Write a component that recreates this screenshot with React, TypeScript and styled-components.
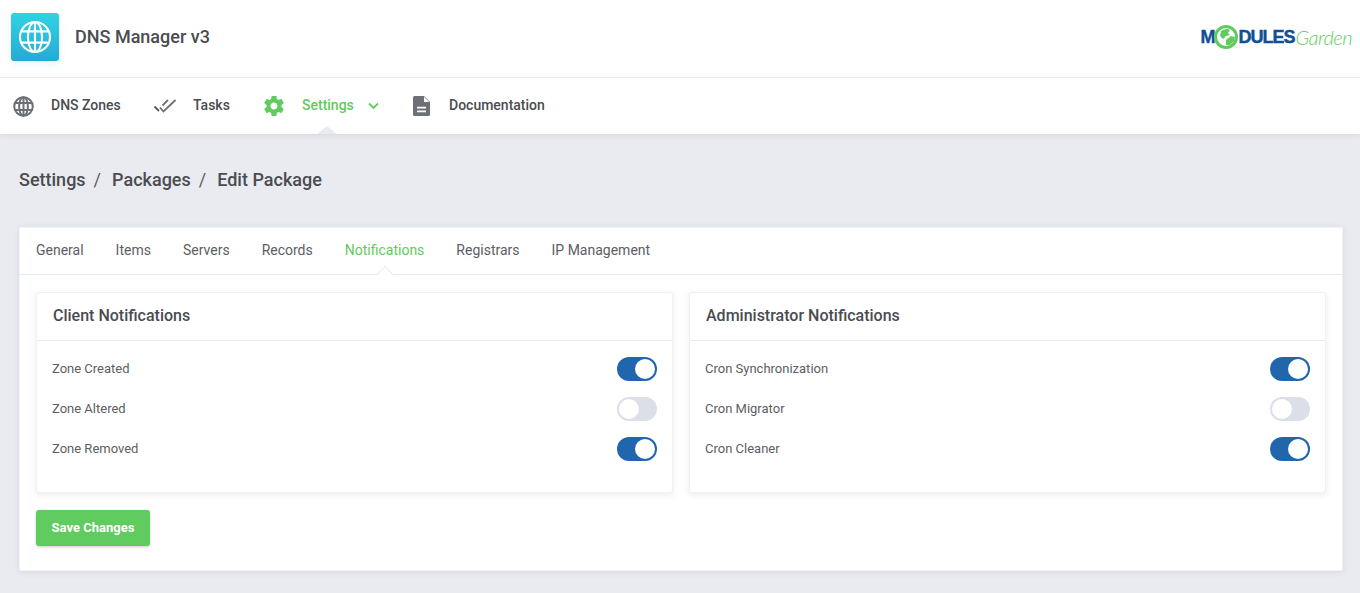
import React from "react";
import styled, { createGlobalStyle } from "styled-components";

const Global = createGlobalStyle`
  html, body { margin: 0; padding: 0; }
  body { background: #e9ebf0; font-family: Roboto, "Liberation Sans", sans-serif; color: #4a4c50; }
  * { box-sizing: border-box; }
`;

const Page = styled.div`
  height: 593px;
  overflow: hidden;
  background: #e9ebf0;
`;
const TopBar = styled.header`
  height: 78px;
  background: #fff;
  border-bottom: 1px solid #eeeff2;
  display: flex;
  align-items: center;
  justify-content: space-between;
  padding: 0 8px 3px 11px;
`;
const Brand = styled.div`
  display: flex;
  align-items: center;
  gap: 16px;
`;
const AppIcon = styled.div`
  width: 48px;
  height: 48px;
  border-radius: 3px;
  background: linear-gradient(180deg, #30d3e2 0%, #24abd5 100%);
  display: flex;
  align-items: center;
  justify-content: center;
  box-shadow: 0 3px 8px rgba(40, 170, 210, 0.12);
`;
const AppName = styled.div`
  font-size: 18px;
  font-weight: 500;
  color: #4a4c50;
  padding-bottom: 2px;
`;
const Logo = styled.div`
  display: flex;
  align-items: center;
  line-height: 26px;
  font-family: "Liberation Sans", Arial, sans-serif;
`;
const LogoBold = styled.span`
  font-size: 18px;
  font-weight: 700;
  color: #0f4f96;
  letter-spacing: -1px;
  -webkit-text-stroke: 0.4px #0f4f96;
`;
const LogoLight = styled.span`
  font-size: 20px;
  font-style: italic;
  font-family: Lato, sans-serif;
  font-weight: 300;
  color: #62cc60;
  letter-spacing: -0.5px;
  margin-left: 1px;
`;
const Nav = styled.nav`
  height: 56px;
  background: #fff;
  display: flex;
  align-items: center;
  padding: 0 0 0 13px;
  box-shadow: 0 1px 5px rgba(60, 65, 85, 0.12);
  position: relative;
`;
const NavItem = styled.div<{ $active?: boolean; $w: number }>`
  width: ${(p) => p.$w}px;
  display: flex;
  align-items: center;
  font-size: 14px;
  font-weight: 500;
  color: ${(p) => (p.$active ? "#5fcb5e" : "#4a4c50")};
  position: relative;
  height: 56px;
  ${(p) =>
    p.$active
      ? `&::after {
          content: "";
          position: absolute;
          left: 54px;
          bottom: 0;
          width: 0;
          height: 0;
          border-left: 10px solid transparent;
          border-right: 10px solid transparent;
          border-bottom: 8px solid #e9ebf0;
        }`
      : ""}
`;
const NavIcon = styled.span<{ $w: number }>`
  width: ${(p) => p.$w}px;
  display: flex;
  align-items: center;
`;
const NavLabel = styled.span`
  margin-bottom: 2px;
`;
const Chevron = styled.span`
  margin-left: 14px;
  display: flex;
`;
const Crumbs = styled.div`
  height: 93px;
  padding: 0 0 3px 19px;
  display: flex;
  align-items: center;
  font-size: 18px;
  font-weight: 500;
  color: #4a4c50;
`;
const CrumbSep = styled.span`
  font-weight: 400;
  margin: 0 11px 0 8px;
  color: #5c5e63;
`;
const Card = styled.section`
  margin: 0 17px 0 19px;
  height: 344px;
  background: #fff;
  border-radius: 3px;
  box-shadow: inset 0 0 0 1px #f2f3f6, 0 1px 6px rgba(60, 65, 85, 0.1);
`;
const Tabs = styled.div`
  height: 48px;
  border-bottom: 1px solid #e9ebf0;
  display: flex;
  align-items: center;
  gap: 32px;
  padding: 0 17px 1px;
`;
const Tab = styled.div<{ $active?: boolean }>`
  font-size: 14px;
  color: ${(p) => (p.$active ? "#5fcb5e" : "#5c5e63")};
  position: relative;
  height: 47px;
  line-height: 47px;
  ${(p) =>
    p.$active
      ? `&::after {
          content: "";
          position: absolute;
          left: 50%;
          bottom: -5px;
          width: 10px;
          height: 10px;
          background: #fff;
          border-left: 1px solid #e9ebf0;
          border-top: 1px solid #e9ebf0;
          transform: translateX(-50%) rotate(45deg);
        }`
      : ""}
`;
const Columns = styled.div`
  display: grid;
  grid-template-columns: 637px 637px;
  gap: 16px;
  padding: 17px 17px 0;
`;
const Panel = styled.div`
  height: 201px;
  background: #fff;
  border-radius: 3px;
  border: 1px solid #f0f1f4;
  box-shadow: 0 2px 6px rgba(60, 65, 85, 0.1);
`;
const PanelTitle = styled.div`
  height: 48px;
  border-bottom: 1px solid #e9ebf0;
  padding: 0 16px 2px;
  display: flex;
  align-items: center;
  font-size: 16px;
  font-weight: 500;
  color: #4a4c50;
`;
const Rows = styled.div`
  padding: 8px 15px 0 15px;
`;
const Row = styled.div`
  height: 40px;
  display: flex;
  align-items: center;
  justify-content: space-between;
  font-size: 13px;
  color: #5c5e63;
`;
const RowLabel = styled.span`
  margin-bottom: 2px;
`;
const Toggle = styled.div<{ $on: boolean }>`
  width: 40px;
  height: 24px;
  border-radius: 12px;
  background: ${(p) => (p.$on ? "#2166ad" : "#dcdfe8")};
  display: flex;
  align-items: center;
  justify-content: ${(p) => (p.$on ? "flex-end" : "flex-start")};
  padding: 2px;
`;
const Knob = styled.div`
  width: 20px;
  height: 20px;
  border-radius: 50%;
  background: #fff;
`;
const Footer = styled.div`
  padding: 17px 17px 0;
`;
const SaveButton = styled.button`
  width: 114px;
  height: 36px;
  border: 0;
  border-radius: 3px;
  background: #60cb5f;
  color: #fff;
  font-family: Roboto, sans-serif;
  font-size: 13px;
  font-weight: 700;
  padding: 0 0 2px;
  box-shadow: 0 1px 3px rgba(60, 65, 85, 0.28);
`;

const Globe = ({ size, color, sw }: { size: number; color: string; sw: number }) => (
  <svg width={size} height={size} viewBox="0 0 24 24" fill="none" stroke={color} strokeWidth={sw}>
    <circle cx="12" cy="12" r="10.6" />
    <ellipse cx="12" cy="12" rx="5" ry="10.6" />
    <path d="M12 1.4v21.2M2 8h20M2 16h20" />
  </svg>
);

const Checks = () => (
  <svg width="24" height="16" viewBox="0 0 24 16" fill="none" stroke="#6e7077" strokeWidth="1.8">
    <path d="M1.5 8.5l4.5 4.5" stroke="#55575c" />
    <path d="M7 9.5l3.5 4L22.5 2" />
    <path d="M9.5 7.5L15 2" />
  </svg>
);

const Gear = () => (
  <svg width="21" height="20" viewBox="1 2 21 20" fill="#60cb5f">
    <path d="M19.43 12.98c.04-.32.07-.64.07-.98s-.03-.66-.07-.98l2.11-1.65c.19-.15.24-.42.12-.64l-2-3.46c-.12-.22-.39-.3-.61-.22l-2.49 1c-.52-.4-1.08-.73-1.69-.98l-.38-2.65C14.46 2.18 14.25 2 14 2h-4c-.25 0-.46.18-.49.42l-.38 2.65c-.61.25-1.17.59-1.69.98l-2.49-1c-.23-.09-.49 0-.61.22l-2 3.46c-.13.22-.07.49.12.64l2.11 1.65c-.04.32-.07.65-.07.98s.03.66.07.98l-2.11 1.65c-.19.15-.24.42-.12.64l2 3.46c.12.22.39.3.61.22l2.49-1c.52.4 1.08.73 1.69.98l.38 2.65c.03.24.24.42.49.42h4c.25 0 .46-.18.49-.42l.38-2.65c.61-.25 1.17-.59 1.69-.98l2.49 1c.23.09.49 0 .61-.22l2-3.46c.12-.22.07-.49-.12-.64l-2.11-1.65zM12 15.5c-1.93 0-3.5-1.57-3.5-3.5s1.57-3.5 3.5-3.5 3.5 1.57 3.5 3.5-1.57 3.5-3.5 3.5z" />
  </svg>
);

const Doc = () => (
  <svg width="20" height="20" viewBox="0 0 20 20">
    <path d="M3.5 0h9.5l6 6v12.5a1.5 1.5 0 0 1-1.5 1.5h-14A1.5 1.5 0 0 1 2 18.5v-17A1.5 1.5 0 0 1 3.5 0z" fill="#6e7077" />
    <path d="M13 .8V6h5.2z" fill="#fff" />
    <path d="M6 10.8h9v1.7H6zM6 14.6h9v1.7H6z" fill="#fff" />
  </svg>
);

const Chev = () => (
  <svg width="11" height="8" viewBox="0 0 11 8" fill="none" stroke="#60cb5f" strokeWidth="1.8">
    <path d="M1 1.5L5.5 6 10 1.5" />
  </svg>
);

const LogoGlobe = () => (
  <svg width="24" height="26" viewBox="0 0 24 26">
    <circle cx="12" cy="13" r="10.5" fill="#fff" stroke="#60cb5f" strokeWidth="3" />
    <path d="M7 7c3-2 7-3 9-1l-2 3 2 2-4 1-3 3-3-3zM12 16l5-4 4 1-1 4-4 4-4 0z" fill="#60cb5f" />
  </svg>
);

type Item = { label: string; on: boolean };
const client: Item[] = [
  { label: "Zone Created", on: true },
  { label: "Zone Altered", on: false },
  { label: "Zone Removed", on: true },
];
const admin: Item[] = [
  { label: "Cron Synchronization", on: true },
  { label: "Cron Migrator", on: false },
  { label: "Cron Cleaner", on: true },
];
const tabs = ["General", "Items", "Servers", "Records", "Notifications", "Registrars", "IP Management"];

const NotificationPanel = ({ title, items }: { title: string; items: Item[] }) => (
  <Panel>
    <PanelTitle>{title}</PanelTitle>
    <Rows>
      {items.map((i) => (
        <Row key={i.label}>
          <RowLabel>{i.label}</RowLabel>
          <Toggle $on={i.on}>
            <Knob />
          </Toggle>
        </Row>
      ))}
    </Rows>
  </Panel>
);

export default function App() {
  return (
    <Page>
      <Global />
      <TopBar>
        <Brand>
          <AppIcon>
            <Globe size={34} color="#fff" sw={1.5} />
          </AppIcon>
          <AppName>DNS Manager v3</AppName>
        </Brand>
        <Logo>
          <LogoBold>M</LogoBold>
          <LogoGlobe />
          <LogoBold>DULES</LogoBold>
          <LogoLight>Garden</LogoLight>
        </Logo>
      </TopBar>
      <Nav>
        <NavItem $w={140}>
          <NavIcon $w={38}>
            <Globe size={21} color="#6e7077" sw={2.3} />
          </NavIcon>
          <NavLabel>DNS Zones</NavLabel>
        </NavItem>
        <NavItem $w={110}>
          <NavIcon $w={40}>
            <Checks />
          </NavIcon>
          <NavLabel>Tasks</NavLabel>
        </NavItem>
        <NavItem $w={148} $active>
          <NavIcon $w={39}>
            <Gear />
          </NavIcon>
          <NavLabel>Settings</NavLabel>
          <Chevron>
            <Chev />
          </Chevron>
        </NavItem>
        <NavItem $w={160}>
          <NavIcon $w={38}>
            <Doc />
          </NavIcon>
          <NavLabel>Documentation</NavLabel>
        </NavItem>
      </Nav>
      <Crumbs>
        Settings<CrumbSep>/</CrumbSep>Packages<CrumbSep>/</CrumbSep>Edit Package
      </Crumbs>
      <Card>
        <Tabs>
          {tabs.map((t) => (
            <Tab key={t} $active={t === "Notifications"}>
              {t}
            </Tab>
          ))}
        </Tabs>
        <Columns>
          <NotificationPanel title="Client Notifications" items={client} />
          <NotificationPanel title="Administrator Notifications" items={admin} />
        </Columns>
        <Footer>
          <SaveButton>Save Changes</SaveButton>
        </Footer>
      </Card>
    </Page>
  );
}
